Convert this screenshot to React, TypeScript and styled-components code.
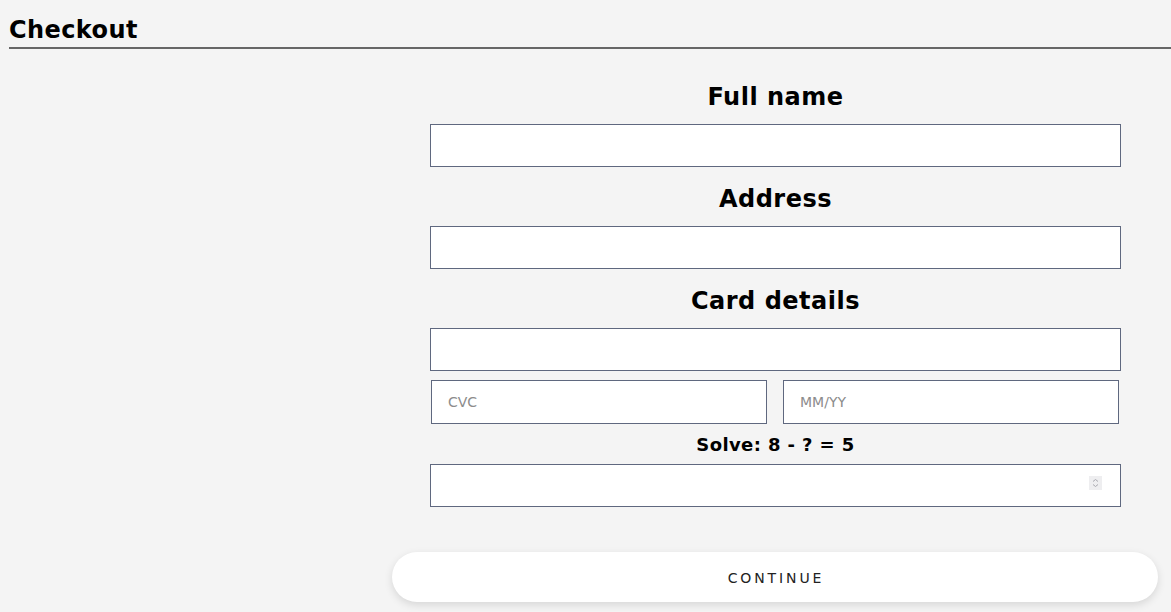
import React, { useState } from 'react';
import styled, { createGlobalStyle } from 'styled-components';

const GlobalStyle = createGlobalStyle`
  html, body {
    margin: 0;
    padding: 0;
    background: #f4f4f4;
    font-family: 'DejaVu Sans', sans-serif;
  }
  * {
    box-sizing: border-box;
  }
`;

const Page = styled.div`
  min-height: 612px;
  padding: 15px 0 0;
`;

const Title = styled.h2`
  margin: 0 0 0 9px;
  font-size: 24px;
  letter-spacing: 0.4px;
  font-weight: 700;
  color: #000;
  line-height: 30px;
  padding-bottom: 2px;
  border-bottom: 2px solid #666;
`;

const Body = styled.div`
  display: flex;
`;

const Spacer = styled.div`
  width: 392px;
  flex-shrink: 0;
`;

const Column = styled.div`
  width: 766px;
  display: flex;
  flex-direction: column;
`;

const Form = styled.form`
  display: flex;
  flex-direction: column;
  padding: 0 37px 0 38px;
  margin-top: 34px;
`;

const Label = styled.label<{ $small?: boolean }>`
  display: block;
  text-align: center;
  font-weight: 700;
  color: #000;
  font-size: ${(p) => (p.$small ? '18px' : '24px')};
  letter-spacing: ${(p) => (p.$small ? '0.4px' : '0.5px')};
  line-height: ${(p) => (p.$small ? '22px' : '28px')};
  margin: ${(p) => (p.$small ? '10px 0 8px' : '0 0 13px')};
`;

const Field = styled.input`
  display: block;
  width: 100%;
  height: 43px;
  border: 1px solid #5f687f;
  background: #fff;
  padding: 0 16px;
  font-family: 'DejaVu Sans', sans-serif;
  font-size: 14px;
  color: #222;
  outline: none;
  appearance: textfield;

  &::placeholder {
    color: #8c8c8c;
  }

  &::-webkit-inner-spin-button,
  &::-webkit-outer-spin-button {
    -webkit-appearance: none;
    margin: 0;
  }
`;

const Block = styled.div`
  margin-bottom: 18px;
`;

const Row = styled.div`
  display: flex;
  gap: 16px;
  padding: 0 2px 0 1px;
  margin-top: 9px;
`;

const Half = styled(Field)`
  flex: 1;
  height: 44px;
`;

const NumberWrap = styled.div`
  position: relative;
`;

const Spinner = styled.span`
  position: absolute;
  right: 19px;
  top: 12px;
  width: 13px;
  height: 14px;
  background: #eeeef0;
  display: flex;
  align-items: center;
  justify-content: center;
  pointer-events: none;
`;

const Button = styled.button`
  margin-top: 45px;
  height: 50px;
  width: 100%;
  border: none;
  border-radius: 25px;
  background: #fff;
  box-shadow: 0 3px 8px rgba(0, 0, 0, 0.12);
  font-family: 'DejaVu Sans', sans-serif;
  font-size: 14px;
  letter-spacing: 2.9px;
  padding: 2px 0 0 2px;
  color: #222;
  cursor: pointer;
`;

const App = () => {
  const [name, setName] = useState('');
  const [address, setAddress] = useState('');
  const [card, setCard] = useState('');
  const [cvc, setCvc] = useState('');
  const [expiry, setExpiry] = useState('');
  const [answer, setAnswer] = useState('');

  return (
    <>
      <GlobalStyle />
      <Page>
        <Title>Checkout</Title>
        <Body>
          <Spacer />
          <Column>
            <Form onSubmit={(e) => e.preventDefault()}>
              <Label htmlFor='name'>Full name</Label>
              <Block>
                <Field id='name' value={name} onChange={(e) => setName(e.target.value)} />
              </Block>
              <Label htmlFor='address'>Address</Label>
              <Block>
                <Field id='address' value={address} onChange={(e) => setAddress(e.target.value)} />
              </Block>
              <Label htmlFor='card'>Card details</Label>
              <Field id='card' value={card} onChange={(e) => setCard(e.target.value)} />
              <Row>
                <Half placeholder='CVC' value={cvc} onChange={(e) => setCvc(e.target.value)} />
                <Half placeholder='MM/YY' value={expiry} onChange={(e) => setExpiry(e.target.value)} />
              </Row>
              <Label $small htmlFor='captcha'>Solve: 8 - ? = 5</Label>
              <NumberWrap>
                <Field
                  id='captcha'
                  type='number'
                  value={answer}
                  onChange={(e) => setAnswer(e.target.value)}
                />
                <Spinner>
                  <svg width='7' height='10' viewBox='0 0 7 10' fill='none' stroke='#a9a9b0' strokeWidth='1'>
                    <path d='M1 3.5 L3.5 1.5 L6 3.5' />
                    <path d='M1 6.5 L3.5 8.5 L6 6.5' />
                  </svg>
                </Spinner>
              </NumberWrap>
            </Form>
            <Button type='button'>CONTINUE</Button>
          </Column>
        </Body>
      </Page>
    </>
  );
};

export default App;
